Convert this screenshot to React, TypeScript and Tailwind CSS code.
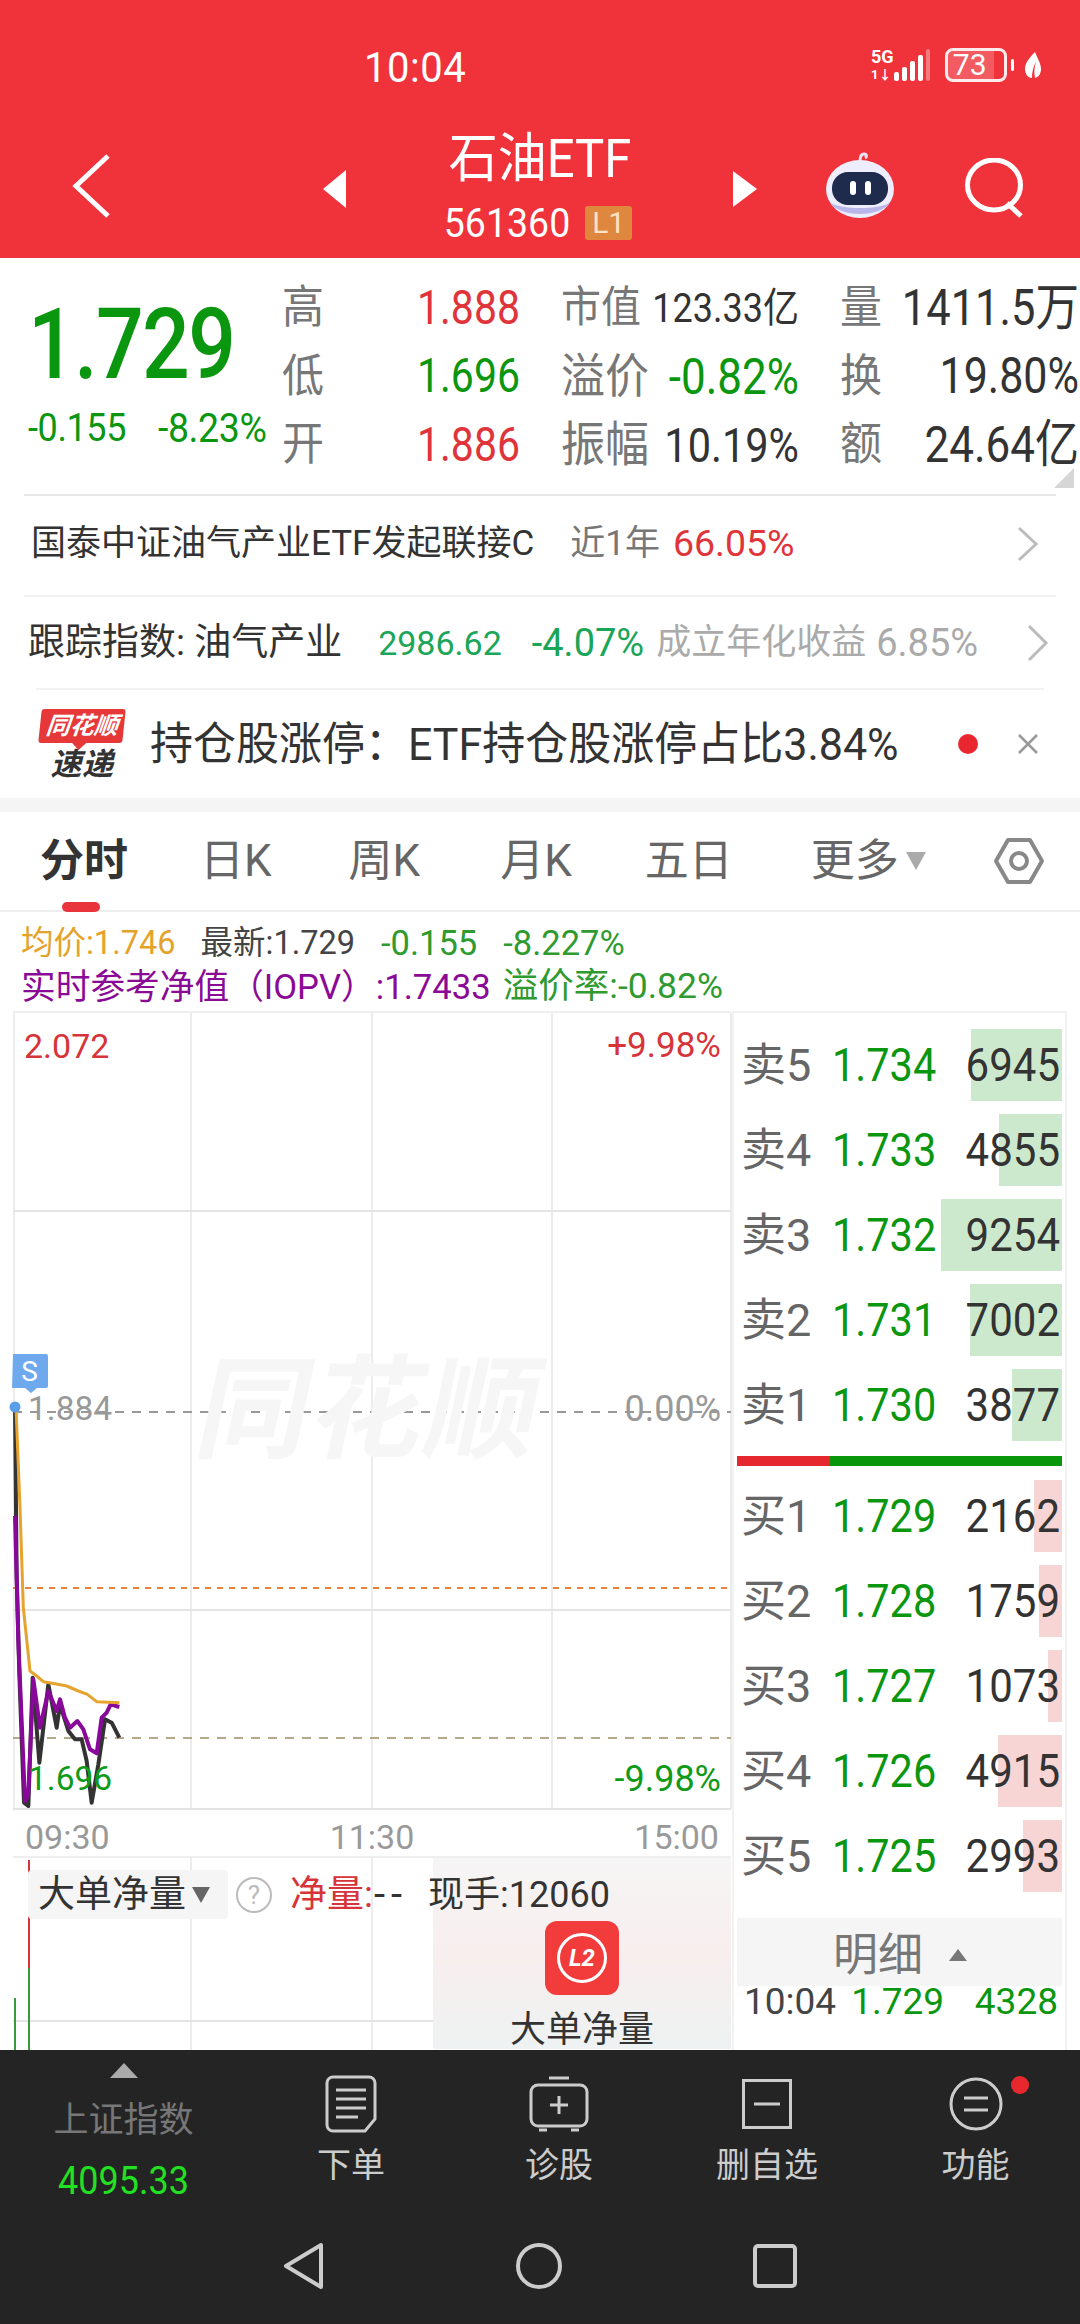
import React from 'react';

const FONT = "font-[Roboto,'Noto_Sans_CJK_SC',sans-serif]";

const SELL = [
  { label: '卖5', price: '1.734', vol: '6945', bar: 91 },
  { label: '卖4', price: '1.733', vol: '4855', bar: 63 },
  { label: '卖3', price: '1.732', vol: '9254', bar: 121 },
  { label: '卖2', price: '1.731', vol: '7002', bar: 92 },
  { label: '卖1', price: '1.730', vol: '3877', bar: 50 },
];

const BUY = [
  { label: '买1', price: '1.729', vol: '2162', bar: 28 },
  { label: '买2', price: '1.728', vol: '1759', bar: 23 },
  { label: '买3', price: '1.727', vol: '1073', bar: 14 },
  { label: '买4', price: '1.726', vol: '4915', bar: 64 },
  { label: '买5', price: '1.725', vol: '2993', bar: 39 },
];

// traced from the picture, in 3x crop coordinates
const BLACK_LINE = [[45, 200], [50, 700], [58, 1000], [72, 1385], [85, 1395], [98, 1010], [118, 1265], [145, 1030], [170, 1160], [180, 1090], [205, 1170], [225, 1195], [245, 1195], [260, 1260], [275, 1385], [295, 1270], [315, 1135], [335, 1145], [358, 1190]];
const PURPLE_LINE = [[45, 525], [55, 900], [75, 1380], [85, 1360], [100, 1015], [120, 1160], [145, 1050], [170, 1110], [180, 1075], [195, 1130], [210, 1160], [232, 1140], [250, 1165], [270, 1225], [290, 1237], [305, 1130], [320, 1115], [332, 1090], [358, 1098]];
const ORANGE_LINE = [[48, 200], [60, 500], [70, 800], [90, 990], [110, 1005], [130, 1022], [165, 1028], [200, 1035], [235, 1050], [262, 1060], [290, 1082], [358, 1085]];

const toPoints = (pts: number[][]) => pts.map(([x, y]) => `${x / 3 - 13},${y / 3 + 328}`).join(' ');

const Stat: React.FC<{ label: string; value: string; size: string; color?: string; labelSize?: string }> = ({ label, value, size, color = 'text-[#333]', labelSize = 'text-[42px]' }) => (
  <div className="flex h-[68.5px] items-center justify-between">
    <span className={`block scale-y-[1.08] leading-none text-[#777] ${labelSize}`}>{label}</span>
    <span className={`block scale-y-[1.15] leading-none ${size} ${color}`}>{value}</span>
  </div>
);

const BookRow: React.FC<{ row: typeof SELL[0]; barColor: string }> = ({ row, barColor }) => (
  <div className="relative flex h-[72px] items-center pl-[4px] pr-[2px]">
    <div className={`absolute right-0 top-0 h-full ${barColor}`} style={{ width: row.bar }} />
    <span className="relative block w-[91px] text-[45px] leading-none text-[#666]">{row.label}</span>
    <span className="relative block scale-y-[1.12] text-[41.5px] leading-none text-[#0b960f]">{row.price}</span>
    <span className="relative ml-auto block scale-y-[1.12] text-[42px] leading-none text-[#333]">{row.vol}</span>
  </div>
);

const BarAction: React.FC<{ label: string; children: React.ReactNode }> = ({ label, children }) => (
  <div className="flex flex-col items-center pt-[25px]">
    <div className="flex h-[58px] items-center justify-center">{children}</div>
    <span className="mt-[12px] text-[34px] leading-[40px] text-[#ccc]">{label}</span>
  </div>
);

export default function App() {
  return (
    <div className={`flex h-[2324px] w-[1080px] flex-col overflow-hidden bg-white ${FONT}`}>
      {/* red header */}
      <header className="relative h-[258px] shrink-0 bg-[#f0323b] text-white">
        <div className="absolute left-[364px] top-[46px] scale-y-[1.08] text-[40px] leading-[44px] tracking-[0.5px]">10:04</div>
        <div className="absolute right-[38px] top-[48px] flex items-center">
          <div className="relative h-[34px] w-[44px]">
            <span className="absolute left-0 top-0 text-[18px] font-bold leading-[18px]">5G</span>
            <span className="absolute bottom-0 left-0 text-[13px] font-bold leading-[14px]">1↓</span>
          </div>
          <svg width="42" height="34" viewBox="0 0 42 34" className="-ml-[26px]">
            <rect x="5" y="24" width="5" height="9" rx="2" fill="#fff" />
            <rect x="13" y="19" width="5" height="14" rx="2" fill="#fff" />
            <rect x="21" y="13" width="5" height="20" rx="2" fill="#fff" />
            <rect x="29" y="7" width="5" height="26" rx="2" fill="#fff" />
            <rect x="37" y="1" width="4" height="32" rx="2" fill="#fff" opacity="0.35" />
          </svg>
          <div className="ml-[14px] flex h-[34px] w-[62px] items-center overflow-hidden rounded-[8px] border-[3px] border-white/90">
            <div className="flex h-full w-[46px] items-center justify-end bg-white/20 text-[30px] leading-none">73&nbsp;</div>
          </div>
          <div className="ml-[4px] h-[12px] w-[3px] rounded-full bg-white" />
          <svg width="18" height="28" viewBox="0 0 18 28" className="ml-[10px]">
            <path d="M11 1C4 8 1 13 1 18c0 5 3 9 7 9 0-6 1-11 4-16-2 6-2 11-1 16 4-1 6-5 6-9 0-5-3-10-6-17z" fill="#fff" />
          </svg>
        </div>

        <svg width="40" height="66" viewBox="0 0 40 66" className="absolute left-[72px] top-[153px]">
          <path d="M36 3 4 33l32 30" fill="none" stroke="#fff" strokeWidth="5" />
        </svg>
        <svg width="24" height="38" viewBox="0 0 24 38" className="absolute left-[323px] top-[170px]">
          <path d="M23 0v38L0 19z" fill="#fff" />
        </svg>
        <svg width="24" height="36" viewBox="0 0 24 36" className="absolute left-[733px] top-[171px]">
          <path d="M0 0v36l24-18z" fill="#fff" />
        </svg>

        <div className="flex flex-col items-center pt-[131px]">
          <div className="scale-y-[1.1] text-[49px] leading-[56px]">石油ETF</div>
          <div className="mt-[19px] flex items-center">
            <span className="ml-[-4px] scale-y-[1.1] text-[37.5px] leading-[34px]">561360</span>
            <span className="ml-[15px] flex h-[34px] w-[47px] items-center justify-center rounded-[3px] bg-[#e0873f] text-[30px] leading-none text-[#fbe3c6]">L1</span>
          </div>
        </div>

        <svg width="72" height="66" viewBox="0 0 72 66" className="absolute left-[824px] top-[152px]">
          <path d="M36 9c0-4 1-7 4-7s3 3 1 4" fill="none" stroke="#e8e6f5" strokeWidth="3" />
          <ellipse cx="36" cy="37" rx="34" ry="29" fill="#eeedfb" />
          <path d="M6 50c8 16 52 16 60 0-8 8-52 8-60 0z" fill="#b8b6ea" />
          <rect x="8" y="20" width="56" height="33" rx="16" fill="#1e2b4d" />
          <rect x="26" y="29" width="6" height="14" rx="3" fill="#fff" />
          <rect x="41" y="29" width="6" height="14" rx="3" fill="#fff" />
        </svg>
        <svg width="60" height="60" viewBox="0 0 60 60" className="absolute left-[965px] top-[158px]">
          <ellipse cx="29" cy="27" rx="26.5" ry="25" fill="none" stroke="#fff" strokeWidth="5" />
          <path d="M42 45 56 58" stroke="#fff" strokeWidth="5" />
        </svg>
      </header>

      <main className="flex min-h-0 flex-1 flex-col overflow-hidden">
        {/* quote */}
        <section className="relative flex h-[236px] shrink-0">
          <div className="w-[282px] shrink-0 pl-[28px]">
            <div className="mt-[51px] h-[72px] origin-left scale-y-[1.18] text-[84px] font-medium leading-[72px] tracking-[-1.6px] text-[#0b960f]">1.729</div>
            <div className="mt-[29px] flex scale-y-[1.1] whitespace-nowrap leading-[36px] tracking-[-0.4px] text-[#0b960f]">
              <span className="text-[36px]">-0.155</span>
              <span className="ml-[32px] text-[37.5px]">-8.23%</span>
            </div>
          </div>
          <div className="grid h-fit grid-cols-[238px_238px_239px] gap-x-[41px] pt-[16px]">
            <Stat label="高" value="1.888" size="text-[41px]" color="text-[#e0343b]" />
            <Stat label="市值" value="123.33亿" size="text-[36px]" labelSize="text-[40px]" />
            <Stat label="量" value="1411.5万" size="text-[43.5px]" />
            <Stat label="低" value="1.696" size="text-[41px]" color="text-[#0b960f]" />
            <Stat label="溢价" value="-0.82%" size="text-[44px]" color="text-[#0b960f]" labelSize="text-[44px]" />
            <Stat label="换" value="19.80%" size="text-[43px]" />
            <Stat label="开" value="1.886" size="text-[41px]" color="text-[#e0343b]" />
            <Stat label="振幅" value="10.19%" size="text-[41.5px]" labelSize="text-[44px]" />
            <Stat label="额" value="24.64亿" size="text-[44px]" />
          </div>
          <svg width="20" height="20" viewBox="0 0 20 20" className="absolute right-[6px] top-[210px]">
            <path d="M20 0v20H0z" fill="#d6d6d6" />
          </svg>
        </section>

        <div className="mx-[24px] h-[2px] shrink-0 bg-[#e8e8e8]" />

        <div className="flex h-[99px] shrink-0 items-center pb-[4px] pl-[31px] pr-[40px] leading-none">
          <span className="text-[35px] text-[#333]">国泰中证油气产业ETF发起联接C</span>
          <span className="ml-[36px] text-[35px] text-[#777]">近1年</span>
          <span className="ml-[13px] text-[37.5px] text-[#e0343b]">66.05%</span>
          <svg width="24" height="36" viewBox="0 0 24 36" className="ml-auto"><path d="M3 2 20 18 3 34" fill="none" stroke="#bbb" strokeWidth="3" /></svg>
        </div>

        <div className="mx-[24px] h-[2px] shrink-0 bg-[#f2f2f2]" />

        <div className="flex h-[91px] shrink-0 items-center whitespace-nowrap pl-[28px] pr-[30px] leading-none">
          <span className="text-[37px] text-[#333]">跟踪指数: 油气产业</span>
          <span className="ml-[36px] text-[34px] text-[#1aa558]">2986.62</span>
          <span className="ml-[30px] text-[38px] text-[#1aa558]">-4.07%</span>
          <span className="ml-[12px] text-[35px] text-[#aaa]">成立年化收益</span>
          <span className="ml-[10px] text-[38px] text-[#aaa]">6.85%</span>
          <svg width="24" height="38" viewBox="0 0 24 38" className="ml-auto"><path d="M3 2 20 19 3 36" fill="none" stroke="#bbb" strokeWidth="3" /></svg>
        </div>

        <div className="mx-[36px] h-[2px] shrink-0 bg-[#f2f2f2]" />

        <div className="flex h-[108px] shrink-0 items-center pl-[38px] pr-[40px]">
          <div className="flex w-[88px] shrink-0 flex-col items-center">
            <div className="relative flex h-[34px] w-[84px] -skew-x-6 items-center justify-center rounded-[3px] bg-[#e63838] text-[24px] font-bold italic leading-none text-white">
              同花顺
              <div className="absolute -bottom-[5px] left-[36px] h-[10px] w-[10px] rotate-45 bg-[#e63838]" />
            </div>
            <div className="mt-[7px] text-[31px] font-bold italic leading-[30px] tracking-[0.5px] text-[#333]">速递</div>
          </div>
          <span className="ml-[24px] scale-y-[1.05] whitespace-nowrap text-[43px] leading-none text-[#333]">持仓股涨停：ETF持仓股涨停占比3.84%</span>
          <div className="ml-auto h-[20px] w-[20px] rounded-full bg-[#e8282e]" />
          <svg width="24" height="24" viewBox="0 0 24 24" className="ml-[38px]"><path d="M3 3l18 18M21 3 3 21" stroke="#999" strokeWidth="2.5" /></svg>
        </div>

        <div className="h-[14px] shrink-0 bg-[#f5f5f5]" />

        {/* period tabs */}
        <nav className="relative flex h-[100px] shrink-0 items-center border-b-2 border-[#eee] pl-[40px] text-[44px] leading-none text-[#666]">
          <span className="font-bold text-[#333]">分时</span>
          <span className="ml-[72px]">日K</span>
          <span className="ml-[77px]">周K</span>
          <span className="ml-[80px]">月K</span>
          <span className="ml-[73px]">五日</span>
          <span className="ml-[78px]">更多</span>
          <svg width="20" height="18" viewBox="0 0 20 18" className="ml-[7px]"><path d="M0 0h20L10 18z" fill="#aaa" /></svg>
          <svg width="50" height="46" viewBox="0 0 50 46" className="ml-auto mr-[36px]">
            <path d="M14 2h22l12 21-12 21H14L2 23z" fill="none" stroke="#888" strokeWidth="4" strokeLinejoin="round" />
            <ellipse cx="25" cy="23" rx="8" ry="8" fill="none" stroke="#888" strokeWidth="4" />
          </svg>
          <div className="absolute -bottom-[2px] left-[62px] h-[10px] w-[38px] rounded-full bg-[#e8343a]" />
        </nav>

        <div className="h-[9px] shrink-0" />
        <div className="flex h-[44px] shrink-0 items-center whitespace-nowrap pl-[21px] leading-none">
          <span className="text-[32.5px] text-[#e5a22a]">均价:1.746</span>
          <span className="ml-[25px] text-[32.5px] text-[#444]">最新:1.729</span>
          <span className="ml-[26px] text-[34.5px] text-[#2f9a2f]">-0.155</span>
          <span className="ml-[26px] text-[34.5px] text-[#2f9a2f]">-8.227%</span>
        </div>
        <div className="flex h-[44px] shrink-0 items-center whitespace-nowrap pl-[21px] leading-none">
          <span className="text-[34.7px] text-[#8a0a96]">实时参考净值（IOPV）:1.7433</span>
          <span className="ml-[12px] text-[35.5px] text-[#2f9a2f]">溢价率:-0.82%</span>
        </div>

        <div className="flex min-h-0 flex-1 pt-[2px]">
          {/* charts */}
          <div className="w-[732px] shrink-0 pl-[13px]">
            <div className="relative h-[796px] w-[718px] border-t-2 border-[#eee]">
              <svg width="718" height="796" viewBox="0 0 718 796" className="absolute left-0 top-0 overflow-visible">
                <path d="M1 0v796M178 0v796M359 0v796M539 0v796M718 0v796" stroke="#ececec" strokeWidth="2" fill="none" />
                <path d="M0 198h718M0 597h718M0 796h718" stroke="#e4e4e4" strokeWidth="2" fill="none" />
                <path d="M0 399h718" stroke="#999" strokeWidth="2" strokeDasharray="9 8" />
                <path d="M0 575h718" stroke="#e8813a" strokeWidth="2" strokeDasharray="6 6" />
                <path d="M0 725h718" stroke="#b5a98a" strokeWidth="2" strokeDasharray="9 8" />
                <polyline points={toPoints(BLACK_LINE)} fill="none" stroke="#333" strokeWidth="4" strokeLinejoin="round" />
                <polyline points={toPoints(PURPLE_LINE)} fill="none" stroke="#88089a" strokeWidth="4" strokeLinejoin="round" />
                <polyline points={toPoints(ORANGE_LINE)} fill="none" stroke="#e6a32e" strokeWidth="3" strokeLinejoin="round" />
                <circle cx="2" cy="394" r="5.5" fill="#5a9ee8" />
                <path d="M0 341h33a2 2 0 0 1 2 2v30a2 2 0 0 1-2 2h-9l-6 5-6-5H-1z" fill="#6ea9ee" />
              </svg>
              <div className="absolute left-[187px] top-[342px] -skew-x-12 text-[112px] font-bold leading-none tracking-[2px] text-[#f6f6f6]">同花顺</div>
              <span className="absolute -left-[1px] top-[343px] w-[35px] text-center text-[28px] leading-[32px] text-white">S</span>
              <span className="absolute left-[11px] top-[16px] text-[34px] leading-[34px] text-[#d6343a]">2.072</span>
              <span className="absolute right-[10px] top-[16px] text-[35px] leading-[34px] text-[#d6343a]">+9.98%</span>
              <span className="absolute left-[15px] top-[379px] text-[33.5px] leading-[34px] text-[#999]">1.884</span>
              <span className="absolute right-[10px] top-[379px] text-[36px] leading-[34px] text-[#999]">0.00%</span>
              <span className="absolute left-[15px] top-[749px] text-[33.5px] leading-[34px] text-[#0f9a1a]">1.696</span>
              <span className="absolute right-[10px] top-[749px] text-[36px] leading-[34px] text-[#0f9a1a]">-9.98%</span>
            </div>

            <div className="flex h-[49px] w-[718px] items-center justify-between px-[12px] pt-[10px] text-[34px] leading-none text-[#999]">
              <span>09:30</span>
              <span>11:30</span>
              <span>15:00</span>
            </div>

            <div className="relative flex h-[193px] w-[718px] border-t-2 border-[#eee]">
              <svg width="420" height="193" viewBox="0 0 420 193" className="absolute left-0 top-0">
                <path d="M178 0v193M359 0v193" stroke="#ececec" strokeWidth="2" fill="none" />
                <path d="M0 163h420" stroke="#e4e4e4" strokeWidth="2" />
                <path d="M16 2v108" stroke="#d8343a" strokeWidth="2" />
                <path d="M16 110v83" stroke="#3c9a3c" strokeWidth="2" />
                <path d="M2 140v53" stroke="#3c9a3c" strokeWidth="2" />
              </svg>
              <div className="ml-auto flex h-full w-[298px] flex-col items-center bg-linear-to-b from-[#f6f5f5] via-[#f8eeee] to-[#eef2f2] pt-[63px]">
                <div className="flex h-[74px] w-[74px] shrink-0 items-center justify-center rounded-[12px] bg-[#f23c3c]">
                  <div className="flex h-[50px] w-[50px] items-center justify-center rounded-full border-[3px] border-white text-[24px] font-bold italic leading-none text-white">L2</div>
                </div>
                <span className="mt-[18px] text-[36px] leading-[34px] text-[#333]">大单净量</span>
              </div>
              <div className="absolute left-[15px] top-[12px] flex items-center whitespace-nowrap">
                <div className="flex h-[49px] w-[200px] items-center rounded-[4px] bg-[#f5f5f5] pl-[10px] text-[37px] leading-none text-[#333]">
                  大单净量
                  <svg width="18" height="16" viewBox="0 0 18 16" className="ml-[6px]"><path d="M0 0h18L9 16z" fill="#666" /></svg>
                </div>
                <div className="ml-[8px] flex h-[36px] w-[36px] items-center justify-center rounded-full border-2 border-[#bbb] text-[26px] leading-none text-[#bbb]">?</div>
                <span className="ml-[18px] text-[37px] leading-none text-[#d6343a]">净量:</span>
                <span className="ml-[1px] text-[40px] leading-none tracking-[6px] text-[#333]">--</span>
                <span className="ml-[20px] text-[36px] leading-none text-[#333]">现手:12060</span>
              </div>
            </div>
          </div>

          {/* order book */}
          <div className="w-[335px] shrink-0 border-x-2 border-t-2 border-[#f2f2f2] px-[3px] pt-[16px]">
            <div className="flex flex-col gap-[13px]">
              {SELL.map(row => <BookRow key={row.label} row={row} barColor="bg-[#cde9cd]" />)}
            </div>
            <div className="mt-[15px] flex h-[10px]">
              <div className="w-[93px] bg-[#e4282e]" />
              <div className="flex-1 bg-[#0a960a]" />
            </div>
            <div className="mt-[14px] flex flex-col gap-[13px]">
              {BUY.map(row => <BookRow key={row.label} row={row} barColor="bg-[#f8d5d5]" />)}
            </div>
            <div className="mt-[26px] flex h-[68px] items-center bg-[#f5f5f5] pl-[96px] pt-[6px]">
              <span className="text-[45px] leading-none text-[#777]">明细</span>
              <svg width="18" height="12" viewBox="0 0 18 12" className="ml-[26px]"><path d="M9 0l9 12H0z" fill="#777" /></svg>
            </div>
            <div className="flex h-[30px] items-center whitespace-nowrap pl-[7px] pr-[4px] text-[37px] leading-none">
              <span className="text-[#444]">10:04</span>
              <span className="ml-[15px] text-[#0b960f]">1.729</span>
              <span className="ml-auto text-[#0b960f]">4328</span>
            </div>
          </div>
        </div>
      </main>

      {/* bottom bar */}
      <footer className="h-[274px] shrink-0 bg-[#242424]">
        <div className="grid h-[170px] grid-cols-[247px_208px_208px_208px_209px]">
          <div className="flex flex-col items-center pt-[13px]">
            <svg width="28" height="15" viewBox="0 0 28 15"><path d="M14 0l14 15H0z" fill="#aaa" /></svg>
            <span className="mt-[25px] text-[35px] leading-[36px] text-[#777]">上证指数</span>
            <span className="mt-[22px] scale-y-[1.1] text-[36px] leading-[40px] text-[#22e022]">4095.33</span>
          </div>
          <BarAction label="下单">
            <svg width="52" height="58" viewBox="0 0 52 58" fill="none" stroke="#ccc" strokeWidth="3">
              <path d="M8 2h36a6 6 0 0 1 6 6v36L40 56H8a6 6 0 0 1-6-6V8a6 6 0 0 1 6-6z" />
              <path d="M11 15h30M11 24h30M11 33h30M11 42h22" />
            </svg>
          </BarAction>
          <BarAction label="诊股">
            <svg width="60" height="56" viewBox="0 0 60 56" fill="none" stroke="#ccc" strokeWidth="3">
              <path d="M20 2h20" />
              <rect x="2" y="9" width="56" height="41" rx="7" />
              <path d="M30 20v18M21 29h18M10 54h8M42 54h8" />
            </svg>
          </BarAction>
          <BarAction label="删自选">
            <svg width="50" height="50" viewBox="0 0 50 50" fill="none" stroke="#ccc" strokeWidth="3">
              <rect x="1.5" y="1.5" width="47" height="47" />
              <path d="M12 25h26" />
            </svg>
          </BarAction>
          <BarAction label="功能">
            <div className="relative">
              <svg width="54" height="54" viewBox="0 0 54 54" fill="none" stroke="#ccc" strokeWidth="3">
                <circle cx="27" cy="27" r="25" />
                <path d="M15 21h24M15 33h24" />
              </svg>
              <div className="absolute -right-[26px] -top-[1px] h-[18px] w-[18px] rounded-full bg-[#e8282e]" />
            </div>
          </BarAction>
        </div>
        <div className="flex items-center justify-center gap-[190px] pt-[22px]">
          <svg width="42" height="48" viewBox="0 0 42 48" fill="none" stroke="#ccc" strokeWidth="4" strokeLinejoin="round">
            <path d="M38 3v42L3 24z" />
          </svg>
          <svg width="48" height="48" viewBox="0 0 48 48" fill="none" stroke="#ccc" strokeWidth="4">
            <circle cx="24" cy="24" r="21" />
          </svg>
          <svg width="44" height="46" viewBox="0 0 44 46" fill="none" stroke="#ccc" strokeWidth="4">
            <rect x="2" y="3" width="40" height="40" rx="3" />
          </svg>
        </div>
      </footer>
    </div>
  );
}
